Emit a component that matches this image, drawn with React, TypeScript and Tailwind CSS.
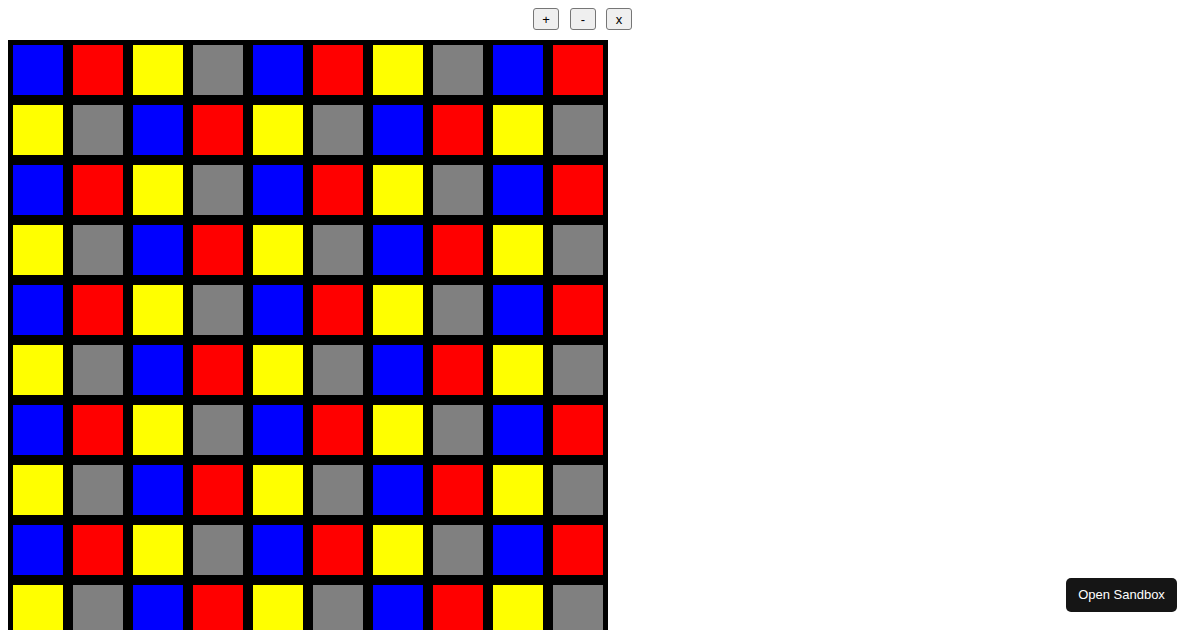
const COLORS = ['#0000ff', '#ff0000', '#ffff00', '#808080'];

function ToolButton({ label, className = '' }: { label: string; className?: string }) {
  return (
    <button
      className={`block h-[22px] w-[26px] rounded-[3px] border border-[#767676] bg-[#efefef] text-[13px] leading-none text-black ${className}`}
    >
      {label}
    </button>
  );
}

export default function App() {
  const cells = Array.from({ length: 100 }, (_, i) => COLORS[i % 4]);

  return (
    <div className="min-h-screen bg-white font-['Liberation_Sans',Arial,sans-serif]">
      <div className="flex h-[40px] items-start pl-[533px] pt-[8px]">
        <ToolButton label="+" />
        <ToolButton label="-" className="ml-[11px]" />
        <ToolButton label="x" className="ml-[10px]" />
      </div>
      <div className="ml-[8px] grid w-[600px] grid-cols-[repeat(10,50px)] gap-[10px] bg-black p-[5px]">
        {cells.map((c, i) => (
          <div key={i} className="h-[50px] w-[50px]" style={{ backgroundColor: c }} />
        ))}
      </div>
      <button className="fixed right-[23px] bottom-[18px] h-[34px] w-[111px] rounded-[5px] bg-[#151515] text-[13px] text-white">
        Open Sandbox
      </button>
    </div>
  );
}
